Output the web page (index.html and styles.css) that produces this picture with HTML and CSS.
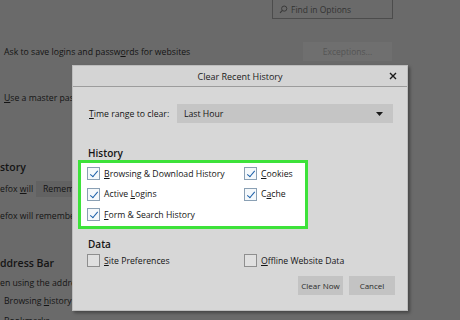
FILE: index.html
```html
<!DOCTYPE html>
<html>
<head>
<meta charset="utf-8">
<link rel="stylesheet" href="styles.css">
</head>
<body>
<div class="page">
  <div class="bg">
    <div class="search">
      <svg class="mag" width="9" height="9" viewBox="0 0 9 9"><circle cx="5.2" cy="3.6" r="2.6" fill="none" stroke="#3a3a3a" stroke-width="1"/><path d="M3.4 5.4 L1 7.8" stroke="#3a3a3a" stroke-width="1.1"/></svg>
      <span>Find in Options</span>
    </div>
    <div class="row r-ask">
      <span class="txt">Ask to save logins and passw<u>o</u>rds for websites</span>
      <span class="bgbtn">Exceptions...</span>
    </div>
    <div class="row r-master"><span class="txt"><u>U</u>se a master password</span></div>
    <div class="heading h-hist">story</div>
    <div class="row r-will"><span class="txt">efox <u>w</u>ill</span><span class="bgsel">Remember history</span></div>
    <div class="row r-rem"><span class="txt">efox will remember your browsing</span></div>
    <div class="heading h-addr">ddress Bar</div>
    <div class="row r-using"><span class="txt">en using the address bar, suggest</span></div>
    <div class="row r-bh"><span class="txt">Browsing <u>h</u>istory</span></div>
    <div class="row r-bm"><span class="txt">Bookmarks</span></div>
  </div>

  <div class="dialog">
    <div class="titlebar">
      <span class="title">Clear Recent History</span>
      <svg class="close" width="8" height="8" viewBox="0 0 8 8"><path d="M1 1 L7 7 M7 1 L1 7" stroke="#1a1a1a" stroke-width="1.4"/></svg>
    </div>
    <div class="dbody">
      <div class="range">
        <span class="rlabel"><u>T</u>ime range to clear:</span>
        <div class="select">
          <span>Last Hour</span>
          <svg width="7" height="4" viewBox="0 0 7 4"><path d="M0 0 H7 L3.5 4 Z" fill="#1a1a1a"/></svg>
        </div>
      </div>
      <div class="sect">History</div>
      <div class="hbox">
        <div class="grid">
          <label class="item"><span class="cb on"></span><span><u>B</u>rowsing &amp; Download History</span></label>
          <label class="item"><span class="cb on"></span><span><u>C</u>ookies</span></label>
          <label class="item"><span class="cb on"></span><span>Active <u>L</u>ogins</span></label>
          <label class="item"><span class="cb on"></span><span>C<u>a</u>che</span></label>
          <label class="item"><span class="cb on"></span><span><u>F</u>orm &amp; Search History</span></label>
        </div>
      </div>
      <div class="sect sect-data">Data</div>
      <div class="grid data">
        <label class="item"><span class="cb"></span><span><u>S</u>ite Preferences</span></label>
        <label class="item"><span class="cb"></span><span><u>O</u>ffline Website Data</span></label>
      </div>
      <div class="buttons">
        <span class="btn">Clear Now</span>
        <span class="btn">Cancel</span>
      </div>
    </div>
  </div>
</div>
</body>
</html>
```
FILE: styles.css
```css
* { box-sizing: border-box; }
html, body { margin: 0; padding: 0; }
body { width: 460px; height: 320px; overflow: hidden; background: #6a6a6a; }
.page {
  position: relative;
  width: 460px; height: 320px;
  background: #6a6a6a;
  font-family: "Open Sans", "Noto Sans", sans-serif;
  font-size: 8.7px;
  color: #141414;
  overflow: hidden;
}
u { text-decoration: underline; text-underline-offset: 1px; }

/* background preferences page */
.bg { display: flex; flex-direction: column; }
.search {
  margin-left: 272px; margin-top: -1px;
  width: 121px; height: 20px;
  border: 1px solid #4c4c4c;
  display: flex; align-items: center; gap: 3px;
  padding-left: 6px;
  color: #333;
  font-size: 8.5px;
}
.row { display: flex; align-items: center; white-space: nowrap; }
.txt { display: block; }
.r-ask { margin-top: 23px; height: 19px; padding-left: 4px; }
.r-ask .txt { width: 299px; }
.bgbtn {
  width: 89px; height: 19px;
  background: #6f6f6f;
  color: #545454;
  display: flex; align-items: center; justify-content: center;
  font-size: 8.5px;
}
.r-master { margin-top: 30px; padding-left: 4px; height: 13px; }
.heading { font-weight: 600; font-size: 10.5px; white-space: nowrap; }
.h-hist { margin-top: 56px; height: 14px; }
.r-will { margin-top: 7px; height: 16px; }
.r-will .txt { width: 36px; }
.bgsel { background: #626262; height: 16px; padding-left: 7px; display: flex; align-items: center; width: 60px; overflow: hidden; }
.r-rem { margin-top: 13px; height: 12px; }
.h-addr { margin-top: 34px; height: 14px; }
.r-using { margin-top: 6px; height: 13px; }
.r-bh { margin-top: 5px; height: 13px; padding-left: 4px; }
.r-bm { margin-top: 7px; height: 13px; padding-left: 4px; }

/* dialog */
.dialog {
  position: absolute;
  left: 72px; top: 65px;
  width: 336px; height: 246px;
  background: #d7d7d7;
  border: 1px solid #bdbdbd;
  box-shadow: 2px 2px 3px rgba(0,0,0,0.35);
  display: flex; flex-direction: column;
}
.titlebar {
  height: 21px;
  border-bottom: 1px solid #9c9c9c;
  display: flex; align-items: center; justify-content: center;
  position: relative;
  background: #d4d4d4;
}
.title { font-size: 9px; color: #1a1a1a; padding-top: 1px; }
.close { position: absolute; right: 10px; top: 6px; }
.dbody { display: flex; flex-direction: column; padding: 0 14px 0 15px; }
.range { display: flex; align-items: center; margin-top: 17px; height: 19px; }
.rlabel { width: 89px; padding-left: 1px; }
.select {
  flex: 1;
  height: 19px;
  background: #c5c5c5;
  display: flex; align-items: center; justify-content: space-between;
  padding: 0 10px 0 7px;
}
.sect { font-weight: 600; font-size: 10px; margin-top: 23px; height: 14px; line-height: 14px; }
.hbox {
  margin-left: -10px;
  margin-top: 0;
  width: 230px; height: 69px;
  border: 3px solid #3de23a;
  background: #ffffff;
  padding: 4px 0 0 6px;
}
.grid { display: grid; grid-template-columns: 157px auto; row-gap: 7.5px; }
.item { display: flex; align-items: center; gap: 4px; height: 13px; white-space: nowrap; }
.cb {
  width: 13px; height: 13px; flex: none;
  border: 1px solid #8e8e8e;
  background: #e0e0e0;
  position: relative;
}
.hbox .cb { background: #f4f8fb; border-color: #8aa0b4; }
.cb.on::after {
  content: "";
  position: absolute;
  left: 4px; top: 1px;
  width: 3px; height: 7px;
  border-right: 1.5px solid #1b5fa8;
  border-bottom: 1.5px solid #1b5fa8;
  transform: rotate(40deg);
}
.sect-data { margin-top: 8px; }
.data { margin-top: 3px; margin-left: -1px; }
.buttons { display: flex; justify-content: flex-end; gap: 6px; margin-top: 9px; margin-right: -2px; }
.btn {
  height: 19px;
  background: #c3c3c3;
  display: flex; align-items: center; justify-content: center;
  font-size: 8px;
  color: #2a2a2a;
}
.btn:first-child { width: 45px; }
.btn:last-child { width: 46px; }
```
